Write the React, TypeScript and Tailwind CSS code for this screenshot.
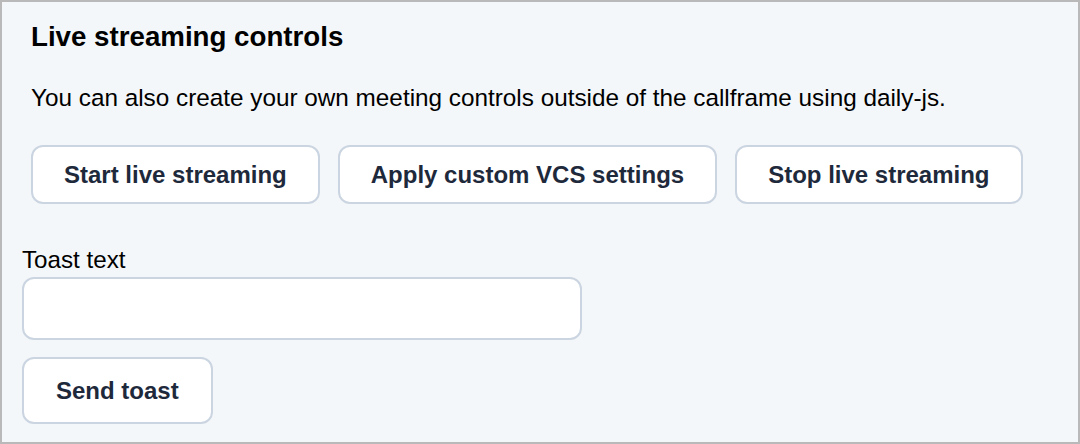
import React from "react";

export default function App() {
  const btn =
    "h-[59px] rounded-[12px] border-2 border-[#cbd5e1] bg-white px-[31px] text-[24px] font-bold text-[#1e293b] leading-none";
  return (
    <div
      className="w-[1080px] h-[444px] border-2 border-[#b9b9b9] bg-[#f4f7f9] text-black overflow-hidden"
      style={{ fontFamily: '"Liberation Sans", Arial, Helvetica, sans-serif' }}
    >
      <div className="pl-[29px] pt-[19px]">
        <h2 className="text-[27.7px] font-bold leading-[32px]">Live streaming controls</h2>
        <p className="mt-[31px] text-[24.3px] leading-[28px]">
          You can also create your own meeting controls outside of the callframe using daily-js.
        </p>
        <div className="mt-[33px] flex gap-[18px]">
          <button className={btn}>Start live streaming</button>
          <button className={btn}>Apply custom VCS settings</button>
          <button className={btn}>Stop live streaming</button>
        </div>
      </div>
      <div className="pl-[20px] pt-[42px] flex flex-col items-start">
        <label className="text-[24.2px] leading-[28px]">Toast text</label>
        <input
          type="text"
          className="mt-[3px] h-[63px] w-[560px] rounded-[12px] border-2 border-[#cbd5e1] bg-white"
        />
        <button className="mt-[17px] h-[67px] rounded-[12px] border-2 border-[#cbd5e1] bg-white px-[32px] text-[24px] font-bold text-[#1e293b] leading-none">
          Send toast
        </button>
      </div>
    </div>
  );
}
